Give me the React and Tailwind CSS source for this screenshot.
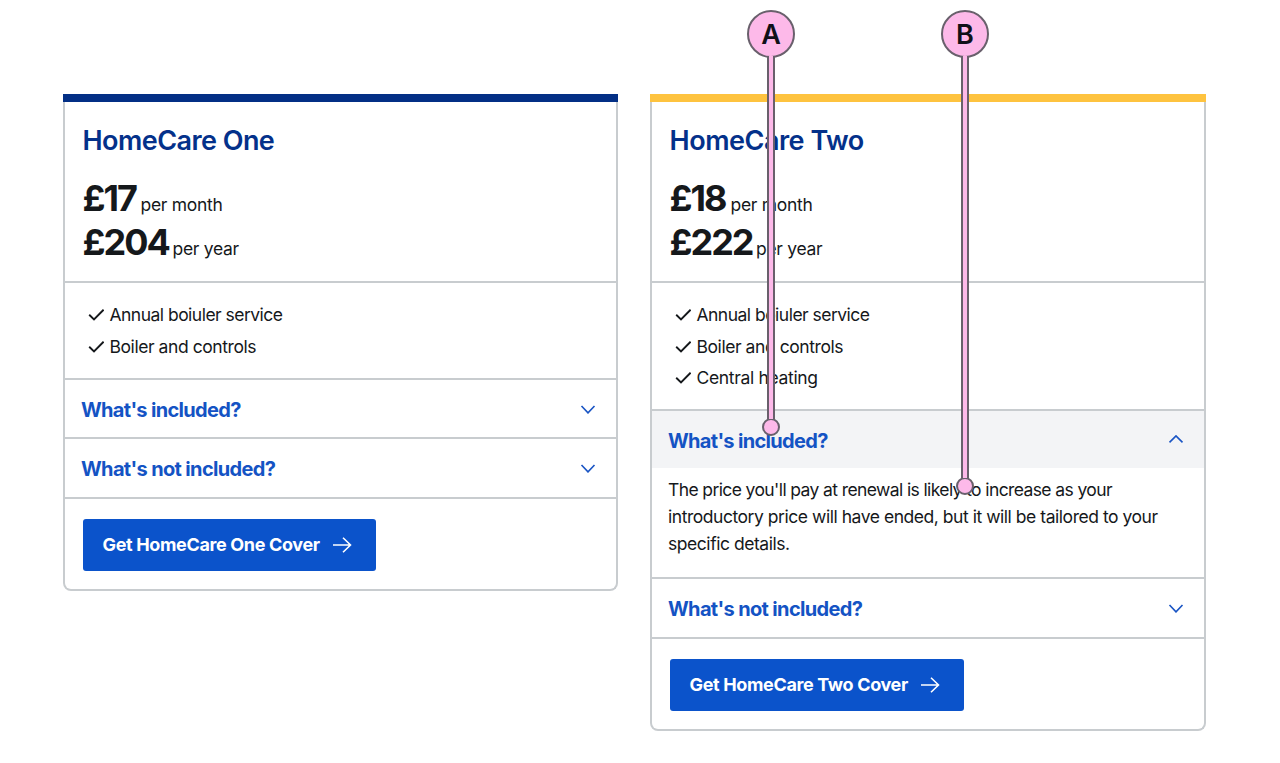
function Check() {
  return (
    <svg width="16" height="13" viewBox="0 0 16 13" fill="none" className="-mt-px shrink-0" aria-hidden="true">
      <path d="M1.2 6.8 6 11.5 15.6 1.7" stroke="#15181b" strokeWidth="1.9" />
    </svg>
  );
}

function Chevron({ up }) {
  return (
    <svg width="16" height="10" viewBox="0 0 16 10" fill="none" className="shrink-0" aria-hidden="true">
      <path d={up ? 'M1.5 7.4 8 .9 14.5 7.4' : 'M1.5 2 8 8.9 14.5 2'} stroke="#1a55c4" strokeWidth="1.6" />
    </svg>
  );
}

function Arrow() {
  return (
    <svg width="19" height="16" viewBox="0 0 19 16" fill="none" className="shrink-0" aria-hidden="true">
      <path d="M0 8H17.5M10 .7 17.5 8 10 15.3" stroke="#fff" strokeWidth="1.6" />
    </svg>
  );
}

function Price({ amount, period, tracking, width }) {
  return (
    <p className="flex h-11 items-baseline text-[#15181b]">
      <span className={`text-[36px] leading-[44px] font-bold whitespace-nowrap ${tracking} ${width}`}>{amount}</span>
      <span className="text-[17.5px] tracking-[-0.3px]">{period}</span>
    </p>
  );
}

function Accordion({ title, open, height, tracking, children }) {
  return (
    <div className="border-b-2 border-[#c8cccf]">
      <button
        className={`flex w-full items-center justify-between pr-[20px] pl-4 ${height} ${open ? 'bg-[#f3f4f6]' : ''}`}
      >
        <span className={`pt-0.5 text-[20px] leading-6 font-bold text-[#1453c4] ${tracking}`}>{title}</span>
        <Chevron up={open} />
      </button>
      {children}
    </div>
  );
}

function Card({ bar, width, title, prices, features, listClass, included, cta, titleTracking, ctaLabel, ctaWidth }) {
  return (
    <section className={`flex flex-col ${width}`}>
      <div className={`h-2 ${bar}`} />
      <div className="rounded-b-lg border-2 border-t-0 border-[#c8cccf]">
        <div className="h-[181px] border-b-2 border-[#c8cccf] pt-[22.5px] pl-[17.5px]">
          <h2 className={`mb-[19px] text-[27px] leading-8 font-semibold text-[#04318a] ${titleTracking}`}>{title}</h2>
          {prices.map((p) => (
            <Price key={p.period} {...p} />
          ))}
        </div>
        <ul className={`border-b-2 border-[#c8cccf] pt-[16.5px] pl-[22.5px] ${listClass}`}>
          {features.map((f) => (
            <li key={f.text} className="flex h-[31.6px] items-center gap-1.5 text-[17.5px] text-[#15181b]">
              <Check />
              <span className={f.tracking}>{f.text}</span>
            </li>
          ))}
        </ul>
        <Accordion title="What's included?" height="h-[57px]" open={Boolean(included)} tracking="tracking-[-0.68px]">
          {included && (
            <div className="h-[109px] pt-2 pl-4 text-[17.5px] leading-[27px] text-[#15181b]">
              {included.map((l) => (
                <span key={l.text} className={`block whitespace-nowrap ${l.tracking}`}>{l.text}</span>
              ))}
            </div>
          )}
        </Accordion>
        <Accordion title="What's not included?" height="h-[58px]" tracking="tracking-[-0.65px]" />
        <div className="h-[90px] pt-5 pl-[18px]">
          <button className={`flex h-[52px] items-center rounded-[3px] bg-[#0b53cb] pl-[19.5px] text-white ${ctaWidth}`}>
            <span className={`text-left text-[18px] leading-6 font-bold tracking-[-0.35px] whitespace-nowrap ${ctaLabel}`}>{cta}</span>
            <Arrow />
          </button>
        </div>
      </div>
    </section>
  );
}

function Marker({ label, place, stem }) {
  return (
    <div className={`absolute top-2.5 flex w-12 flex-col items-center ${place}`}>
      <div className="flex size-12 items-center justify-center rounded-full border-2 border-[#69606c] bg-[#fdb9e9] pt-px text-[27px] leading-8 font-semibold text-[#101018]">
        {label}
      </div>
      <div className={`relative z-10 -mt-0.5 w-2 border-x-2 border-[#69606c] bg-[#fdb9e9] ${stem}`} />
      <div className="-mt-px size-[18px] rounded-full border-2 border-[#69606c] bg-[#fdb9e9]" />
    </div>
  );
}

export default function App() {
  return (
    <main className="relative h-[763px] w-[1280px] overflow-hidden bg-white font-['Inter',sans-serif]">
      <div className="flex items-start gap-8 pt-[94px] pl-[63px]">
        <Card
          bar="bg-[#032f85]"
          width="w-[555px]"
          title="HomeCare One"
          titleTracking="tracking-[-0.55px]"
          prices={[
            { amount: '£17', period: 'per month', tracking: 'tracking-[-2px]', width: 'w-[58px]' },
            { amount: '£204', period: 'per year', tracking: 'tracking-[-2px]', width: 'w-[90px]' },
          ]}
          listClass="h-[97px]"
          features={[
            { text: 'Annual boiuler service', tracking: 'tracking-[-0.52px]' },
            { text: 'Boiler and controls', tracking: 'tracking-[-0.43px]' },
          ]}
          cta="Get HomeCare One Cover"
          ctaLabel="w-[230px]"
          ctaWidth="w-[293px]"
        />
        <Card
          bar="bg-[#fec33f]"
          width="w-[556px]"
          title="HomeCare Two"
          titleTracking="tracking-[-0.47px]"
          prices={[
            { amount: '£18', period: 'per month', tracking: 'tracking-[-2px]', width: 'w-[61px]' },
            { amount: '£222', period: 'per year', tracking: 'tracking-[-2px]', width: 'w-[86.5px]' },
          ]}
          listClass="h-[128px]"
          features={[
            { text: 'Annual boiuler service', tracking: 'tracking-[-0.52px]' },
            { text: 'Boiler and controls', tracking: 'tracking-[-0.43px]' },
            { text: 'Central heating', tracking: 'tracking-[-0.33px]' },
          ]}
          included={[
            { text: "The price you'll pay at renewal is likely to increase as your", tracking: 'tracking-[-0.61px]' },
            { text: 'introductory price will have ended, but it will be tailored to your', tracking: 'tracking-[-0.46px]' },
            { text: 'specific details.', tracking: 'tracking-[-0.45px]' },
          ]}
          cta="Get HomeCare Two Cover"
          ctaLabel="w-[231px]"
          ctaWidth="w-[294px]"
        />
      </div>
      <Marker label="A" place="left-[747px]" stem="h-[363px]" />
      <Marker label="B" place="left-[941px]" stem="h-[422px]" />
    </main>
  );
}
